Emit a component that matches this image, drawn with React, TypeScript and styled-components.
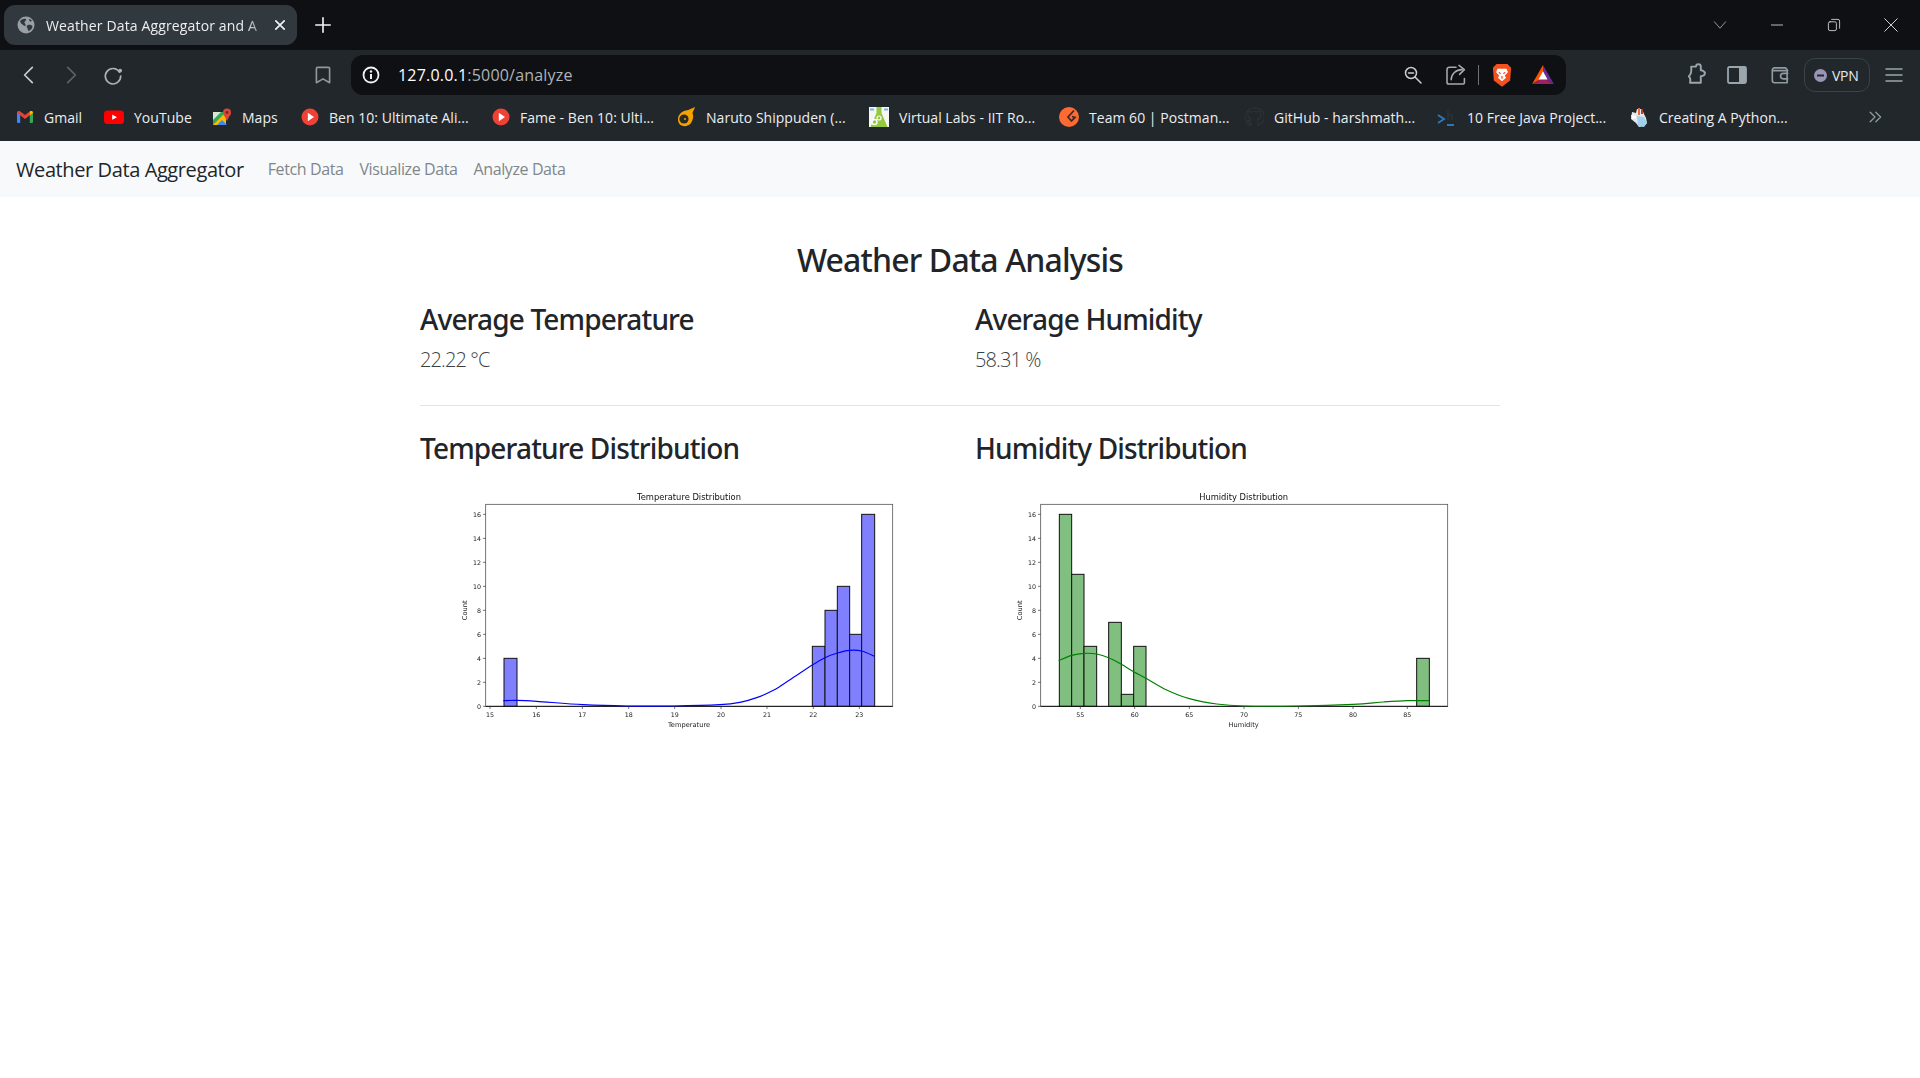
import React from "react";
import styled, { createGlobalStyle } from "styled-components";

const Global = createGlobalStyle`
  html, body { margin: 0; padding: 0; background: #fff; }
  body { font-family: "Open Sans", "Liberation Sans", sans-serif; color: #212529; width: 1920px; height: 1078px; overflow: hidden; }
`;
const Page = styled.div`display: flex; flex-direction: column; width: 1920px; height: 1078px;`;
const TabStrip = styled.div`display: flex; align-items: center; height: 50px; background: #0e1014; padding-left: 4px;`;
const Tab = styled.div`display: flex; align-items: center; flex: none; width: 293px; height: 40px; box-sizing: border-box; padding: 0 10px 0 13px; background: #31383e; border-radius: 11px; color: #eceef0;`;
const TabTitle = styled.span`
  flex: 1; margin-left: 11px; font-size: 14px; letter-spacing: 0.14px; white-space: nowrap;
  -webkit-mask-image: linear-gradient(90deg, #000 88%, rgba(0,0,0,0.2) 97%);
  mask-image: linear-gradient(90deg, #000 88%, rgba(0,0,0,0.2) 97%);
`;
const NewTab = styled.div`display: flex; margin-left: 17px;`;
const WindowControls = styled.div`display: flex; align-items: center; margin-left: auto;`;
const WindowButton = styled.div<{ $w: number }>`display: flex; justify-content: center; width: ${p => p.$w}px;`;
const Toolbar = styled.div`display: flex; align-items: center; height: 45px; background: #22272b; padding: 5px 0 0 8px; box-sizing: border-box;`;
const ToolButton = styled.div<{ $w?: number; $ml?: number }>`display: flex; justify-content: center; align-items: center; flex: none; width: ${p => p.$w ?? 42}px; height: 40px; margin-left: ${p => p.$ml ?? 0}px;`;
const ToolSpacer = styled.div`width: 168px; flex: none;`;
const AddressBar = styled.div`display: flex; align-items: center; flex: none; width: 1215px; height: 40px; margin: 0 109px 0 7px; padding-left: 11px; box-sizing: border-box; border-radius: 12px; background: #0e1014;`;
const Url = styled.div`margin-left: 18px; font-size: 16px; letter-spacing: 0.2px; color: #aeb3b8; flex: 1;`;
const UrlHost = styled.span`color: #fff;`;
const AddressDivider = styled.div`width: 1px; height: 20px; background: #6b7278; margin: 0 13px 0 2px;`;
const BraveMark = styled.svg`flex: none; margin-right: 8px;`;
const Vpn = styled.div`display: flex; align-items: center; flex: none; width: 66px; height: 34px; box-sizing: border-box; margin: 0 1px; padding-left: 8px; border: 1px solid #3b4248; border-radius: 11px; color: #e8eaed; font-size: 14px; letter-spacing: -0.3px; gap: 4px;`;
const BookmarkBar = styled.div`display: flex; align-items: center; height: 46px; box-sizing: border-box; padding: 0 0 2px 16px; background: #22272b; position: relative; z-index: 1;`;
const Bookmark = styled.div<{ $w: number }>`display: flex; align-items: center; flex: none; width: ${p => p.$w}px; gap: 10px; font-size: 14px; letter-spacing: 0.03px; color: #eceef0; white-space: nowrap;`;
const More = styled.div`display: flex; position: absolute; right: 37px; top: 14px;`;
const NavBar = styled.nav`display: flex; align-items: center; height: 56px; background: #f8f9fa; padding-left: 16px;`;
const Brand = styled.div`font-size: 20px; letter-spacing: -0.4px; color: #212529; margin-right: 24px; white-space: nowrap;`;
const NavLink = styled.div`font-size: 16px; letter-spacing: -0.4px; color: #80868b; margin-right: 16px; white-space: nowrap;`;
const Container = styled.main`width: 1080px; margin: 44px auto 0;`;
const PageTitle = styled.h2`margin: 0 0 23px; text-align: center; font-family: "Noto Sans", sans-serif; font-size: 32px; font-weight: 500; line-height: 38px; letter-spacing: -0.85px;`;
const Row = styled.div`display: grid; grid-template-columns: 525px 525px; column-gap: 30px;`;
const Heading = styled.h3`margin: 0 0 9px; font-family: "Noto Sans", sans-serif; font-size: 28px; font-weight: 500; line-height: 34px; letter-spacing: -0.85px;`;
const Lead = styled.p`margin: 0; font-size: 20px; font-weight: 300; line-height: 30px; letter-spacing: -0.9px; color: #3a3f44;`;
const Rule = styled.hr`margin: 30px 0 25px; border: 0; border-top: 1px solid #e3e4e5;`;
const ChartSvg = styled.svg`display: block; width: 525px; height: 260px; margin-top: 16px; filter: blur(0.3px);`;
const TickText = styled.text`font-family: "DejaVu Sans", sans-serif; font-size: 19px; fill: #222;`;
const AxisText = styled.text`font-family: "DejaVu Sans", sans-serif; font-size: 20px; fill: #222;`;
const TitleText = styled.text`font-family: "DejaVu Sans", sans-serif; font-size: 25px; fill: #111;`;

type Pt = [number, number];
const smooth = (pts: Pt[]) => {
  let d = `M${pts[0][0]} ${pts[0][1]}`;
  for (let i = 0; i < pts.length - 1; i++) {
    const p0 = pts[Math.max(i - 1, 0)], p1 = pts[i], p2 = pts[i + 1], p3 = pts[Math.min(i + 2, pts.length - 1)];
    d += ` C${p1[0] + (p2[0] - p0[0]) / 6} ${p1[1] + (p2[1] - p0[1]) / 6} ${p2[0] - (p3[0] - p1[0]) / 6} ${p2[1] - (p3[1] - p1[1]) / 6} ${p2[0]} ${p2[1]}`;
  }
  return d;
};

interface ChartProps {
  offset: number; left: number; right: number; title: string; xlabel: string; center: number;
  bars: [number, number, number][]; ticks: [string, number][]; curve: Pt[]; fill: string; line: string; countX: number;
}
const Chart = ({ offset, left, right, title, xlabel, center, bars, ticks, curve, fill, line, countX }: ChartProps) => (
  <ChartSvg viewBox={`${-offset} 0 1575 780`}>
    <TitleText x={center} y={56} textAnchor="middle">{title}</TitleText>
    <rect x={left} y={70} width={right - left} height={606} fill="#fff" stroke="#555" strokeWidth={2.4} />
    {bars.map(([a, b, c], i) => (
      <rect key={i} x={a} y={676 - c * 36} width={b - a} height={c * 36} fill={fill} stroke="#111" strokeWidth={3} />
    ))}
    <line x1={left} x2={right} y1={676} y2={676} stroke="#111" strokeWidth={3} />
    <path d={smooth(curve)} fill="none" stroke={line} strokeWidth={3.5} />
    {[0, 2, 4, 6, 8, 10, 12, 14, 16].map(v => (
      <g key={v}>
        <line x1={left - 8} x2={left} y1={676 - v * 36} y2={676 - v * 36} stroke="#333" strokeWidth={2} />
        <TickText x={left - 14} y={683 - v * 36} textAnchor="end">{v}</TickText>
      </g>
    ))}
    {ticks.map(([t, x]) => (
      <g key={t}>
        <line x1={x} x2={x} y1={676} y2={684} stroke="#333" strokeWidth={2} />
        <TickText x={x} y={707} textAnchor="middle">{t}</TickText>
      </g>
    ))}
    <AxisText x={center} y={738} textAnchor="middle">{xlabel}</AxisText>
    <AxisText transform={`translate(${countX} 388) rotate(-90)`} x={0} y={0} textAnchor="middle">Count</AxisText>
  </ChartSvg>
);

const tempBars: [number, number, number][] = [[192, 231, 4], [1117, 1155, 5], [1155, 1192, 8], [1192, 1229, 10], [1229, 1265, 6], [1265, 1304, 16]];
const humBars: [number, number, number][] = [[178, 215, 16], [215, 252, 11], [252, 290, 5], [326, 364, 7], [364, 401, 1], [401, 438, 5], [1250, 1288, 4]];
const tempTicks: [string, number][] = [["15", 150], ["16", 289], ["17", 427], ["18", 566], ["19", 704], ["20", 843], ["21", 981], ["22", 1120], ["23", 1258]];
const humTicks: [string, number][] = [["55", 241], ["60", 404], ["65", 568], ["70", 732], ["75", 895], ["80", 1059], ["85", 1222]];
const tempCurve: Pt[] = [[190, 659], [231, 658], [290, 661], [430, 671], [560, 675], [700, 675], [840, 671], [900, 664], [950, 650], [1000, 628], [1050, 596], [1117, 552], [1155, 530], [1192, 516], [1229, 508], [1265, 510], [1304, 526]];
const humCurve: Pt[] = [[176, 539], [215, 523], [252, 517], [290, 519], [326, 530], [364, 550], [401, 572], [438, 592], [500, 627], [568, 653], [650, 669], [732, 675], [895, 675], [1059, 670], [1150, 663], [1222, 659], [1288, 659]];

const Ico = ({ s = 20, c = "#aab2b8", w = 1.6, children }: { s?: number; c?: string; w?: number; children: React.ReactNode }) => (
  <svg width={s} height={s} viewBox="0 0 20 20" fill="none" stroke={c} strokeWidth={w} strokeLinecap="round" strokeLinejoin="round">{children}</svg>
);
const Favicon = ({ children, w = 20 }: { children: React.ReactNode; w?: number }) => (
  <svg width={w} height={20} viewBox={`0 0 ${w} 20`} style={{ flex: "none" }}>{children}</svg>
);
const Play = () => (<Favicon w={18}><circle cx="9" cy="10" r="8.5" fill="#ef4135" /><path d="M6.8 5.8 13 10l-6.2 4.2z" fill="#fff" /></Favicon>);
const Gmail = () => (
  <Favicon w={18}>
    <path d="M1 5.5h3.2V16H2.2A1.2 1.2 0 0 1 1 14.8z" fill="#4285f4" />
    <path d="M13.8 5.5H17v9.3a1.2 1.2 0 0 1-1.2 1.2h-2z" fill="#34a853" />
    <path d="M1 5.8C1 4 3 3.4 4.2 4.4L9 8l4.8-3.6C15 3.4 17 4 17 5.8L9 12z" fill="#ea4335" />
    <path d="M13.8 4.4C15 3.4 17 4 17 5.8l-3.2 2.4z" fill="#fbbc04" />
  </Favicon>
);
const YouTube = () => (<Favicon><rect x="0" y="3.5" width="20" height="13.5" rx="3.5" fill="#f00" /><path d="M8.2 7.6 13 10.2l-4.8 2.6z" fill="#fff" /></Favicon>);
const Maps = () => (
  <Favicon w={19}>
    <path d="M0 5h13v13H0z" fill="#35a853" />
    <path d="M0 18 13 5v13z" fill="#fbbc04" />
    <path d="M4 18l5-5 5 5z" fill="#4285f4" />
    <path d="M0 5h8L0 13z" fill="#d9e7d4" />
    <circle cx="14" cy="5.5" r="4" fill="#d8473c" /><path d="M11 8l3 6 3-6z" fill="#d8473c" /><circle cx="14" cy="5.5" r="1.4" fill="#7e211b" />
  </Favicon>
);
const Naruto = () => (
  <Favicon>
    <path d="M2 12C2 7 7 4 10 3.5 13 3 16 1 19 0c-1 3-2 4-2.500 6C18 9 17 13 15 16c-3 4-9 4-11.500 1C2.500 16 2 14 2 12z" fill="#f5a100" />
    <circle cx="8" cy="12" r="4.600" fill="#2a2a25" /><circle cx="9" cy="12" r="1" fill="#f5a100" />
  </Favicon>
);
const Labs = () => (
  <Favicon>
    <rect width="20" height="20" fill="#f5f7f5" />
    <path d="M1 2.500h4M15 2.500h4" stroke="#78b5dc" strokeWidth="2" />
    <path d="M7.500 0h5v6l6 14H1.500l6-14z" fill="#94c83d" />
    <circle cx="5.500" cy="15" r="2.500" fill="none" stroke="#fff" strokeWidth="1.400" /><circle cx="10" cy="11" r="2" fill="none" stroke="#fff" strokeWidth="1.200" />
  </Favicon>
);
const Postman = () => (
  <Favicon><circle cx="10" cy="10" r="10" fill="#ff6a33" /><path d="M15 3.500 9 10l3.500 4 3.500-3.500-3-1" fill="none" stroke="#3d2b22" strokeWidth="1.800" /></Favicon>
);
const GitHub = () => (
  <Favicon><path d="M10 1a9 9 0 0 0-3 17.500v-3c-2 .5-3-1-3.500-2 2 .5 3 0 3.500-1-3-1-3.500-3-3-5.500L4 4l3 1a8 8 0 0 1 6 0l3-1 .5 3c.5 2.500 0 4.500-3 5.500.5 1 .5 1.500.5 6A9 9 0 0 0 10 1z" fill="none" stroke="#2c3236" strokeWidth="1.200" /></Favicon>
);
const Term = () => (
  <Favicon><path d="M1 8l6 4-6 4" fill="none" stroke="#2b78b8" strokeWidth="2" /><path d="M11 3v10M11 8h4v5" fill="none" stroke="#2b3238" strokeWidth="1.600" /><path d="M10 18h7" stroke="#2b78b8" strokeWidth="2" /></Favicon>
);
const Python = () => (
  <Favicon>
    <path d="M3 5l4 1 1-4 5 0 2 5 2 4 1 5-3 3-5 1-3-4-5-4z" fill="#e4e8ec" />
    <path d="M8 9l7 1 3 6-3 4-6-1z" fill="#9fd0ee" />
    <path d="M9 1h2v7H9z" fill="#e06b3c" /><path d="M12 2h2v5h-2z" fill="#c0392b" /><path d="M2 8l5 1v2l-4 1z" fill="#fff" />
  </Favicon>
);

const books: [React.ReactNode, string, number][] = [
  [<Gmail />, "Gmail", 88], [<YouTube />, "YouTube", 109], [<Maps />, "Maps", 88],
  [<Play />, "Ben 10: Ultimate Ali...", 191], [<Play />, "Fame - Ben 10: Ulti...", 184],
  [<Naruto />, "Naruto Shippuden (...", 193], [<Labs />, "Virtual Labs - IIT Ro...", 190],
  [<Postman />, "Team 60 | Postman...", 185], [<GitHub />, "GitHub - harshmath...", 193],
  [<Term />, "10 Free Java Project...", 192], [<Python />, "Creating A Python...", 180],
];

export default function App() {
  return (
    <Page>
      <Global />
      <TabStrip>
        <Tab>
          <svg width="18" height="18" viewBox="0 0 18 18" style={{ flex: "none" }}>
            <circle cx="9" cy="9" r="8.500" fill="#9aa0a6" />
            <path d="M3 5c2-2 4-2.500 6-2 .5 1.500-1 2-1.500 3S9 8 8.500 9.500 6.500 9 5.500 8.500 3.500 7 3 5zM11 9c2-.5 4 0 4.500 1.500-.5 2.500-2 3.800-4 4.500-1-1-.5-2.500-1.500-3.500S10 9.500 11 9zM12.500 2.800l2.500 2-1.500 1-1.500-1.500z" fill="#31383e" />
          </svg>
          <TabTitle>Weather Data Aggregator and A</TabTitle>
          <Ico s={14} c="#f2f3f4" w={2.4}><path d="M4 4l12 12M16 4 4 16" /></Ico>
        </Tab>
        <NewTab><Ico s={18} c="#f2f3f4" w={1.800}><path d="M10 2v16M2 10h16" /></Ico></NewTab>
        <WindowControls>
          <WindowButton $w={56}><Ico s={16} c="#b8bcc0" w={1}><path d="M3 6l7 8 7-8" /></Ico></WindowButton>
          <WindowButton $w={57}><Ico s={16} c="#e6e8ea" w={1}><path d="M3 10h14" /></Ico></WindowButton>
          <WindowButton $w={57}><Ico s={16} c="#e6e8ea" w={1}><rect x="3" y="6" width="10" height="11" rx="2" /><path d="M7 3h8a2 2 0 0 1 2 2v9" /></Ico></WindowButton>
          <WindowButton $w={58}><Ico s={18} c="#e6e8ea" w={1}><path d="M3 3l14 14M17 3 3 17" /></Ico></WindowButton>
        </WindowControls>
      </TabStrip>
      <Toolbar>
        <ToolButton><Ico s={22} c="#c8ced2" w={1.500}><path d="M13 3 6 10l7 7" /></Ico></ToolButton>
        <ToolButton><Ico s={22} c="#5c6469" w={1.500}><path d="M7 3l7 7-7 7" /></Ico></ToolButton>
        <ToolButton><Ico s={22} c="#aab2b8" w={1.500}><path d="M16 7.500A7 7 0 1 0 17 11" /><circle cx="16.500" cy="6" r="1" fill="#aab2b8" /></Ico></ToolButton>
        <ToolSpacer />
        <ToolButton $w={42}><Ico s={22} c="#8f979d" w={1.500}><path d="M5 3h10a1 1 0 0 1 1 1v13l-6-3.500L4 17V4a1 1 0 0 1 1-1z" /></Ico></ToolButton>
        <AddressBar>
          <svg width="18" height="18" viewBox="0 0 18 18"><circle cx="9" cy="9" r="7.500" fill="none" stroke="#f2f3f4" strokeWidth="1.800" /><path d="M9 8v5" stroke="#f2f3f4" strokeWidth="2" /><circle cx="9" cy="5.500" r="1.200" fill="#f2f3f4" /></svg>
          <Url><UrlHost>127.0.0.1</UrlHost>:5000/analyze</Url>
          <Ico s={20} c="#c8ced2" w={1.500}><circle cx="8" cy="8" r="5.500" /><path d="M5.500 8h5M12 12l6 6" /></Ico>
          <ToolButton $w={40} $ml={13}>
            <Ico s={24} c="#a4a9ae" w={1.300}><path d="M10 3.500H4.500a2 2 0 0 0-2 2V16a1.500 1.500 0 0 0 1.500 1.500h12a1 1 0 0 0 1-1V13" /><path d="M6 14c0-5 4-8.500 9-8.500M12.500 2 17 5.500 13 9.500" /></Ico>
          </ToolButton>
          <AddressDivider />
          <BraveMark width="20" height="24" viewBox="0 0 22 26">
            <path d="M5 1h12l4 4-1 14-9 7-9-7L1 5z" fill="#f4511e" />
            <path d="M6 6h10l1.500 4-3.500 3.500 1.500 2.500-4.500 4-4.500-4L8 13.500 4.500 10z" fill="#fff" />
            <path d="M7.500 10l2 1.500M14.500 10l-2 1.500M11 14v3" stroke="#f4511e" strokeWidth="1.400" />
          </BraveMark>
          <ToolButton $w={46}>
            <svg width="22" height="20" viewBox="0 0 24 22">
              <path d="M12 0 24 21 12 14z" fill="#662d91" /><path d="M12 0 0 21 12 14z" fill="#ff5000" /><path d="M0 21h24l-12-7z" fill="#9e1f63" /><path d="M12 7l5 9H7z" fill="#fff" />
            </svg>
          </ToolButton>
        </AddressBar>
        <ToolButton $w={42}><Ico s={24} c="#9aa6ac" w={1.600}><path d="M6 3h4a2 2 0 0 1 4 0v3c2 0 2.500 1 3.500 2 0 2-1 3-3.500 3v5.500H5c.5-2 .5-4-1-5.500 1.500-1 2.500-3 2-8z" /></Ico></ToolButton>
        <ToolButton $w={40}>
          <svg width="20" height="18" viewBox="0 0 20 18"><rect x="1" y="1" width="18" height="16" rx="1.500" fill="none" stroke="#9aa6ac" strokeWidth="1.800" /><rect x="12" y="1" width="7" height="16" fill="#9aa6ac" /></svg>
        </ToolButton>
        <ToolButton $w={46}><Ico s={22} c="#8f9ba1" w={1.500}><path d="M3 5.500A2 2 0 0 1 5 3.500h10l1.500 1.500v12H5a2 2 0 0 1-2-2zM3 6h14M17 8.500h-4a1.500 1.500 0 0 0 0 5h4" /></Ico></ToolButton>
        <Vpn>
          <svg width="15" height="15" viewBox="0 0 15 15" style={{ flex: "none" }}><circle cx="7.500" cy="7.500" r="6.500" fill="#9896b4" /><rect x="4" y="6.500" width="7" height="2" fill="#22272b" /></svg>
          VPN
        </Vpn>
        <ToolButton $w={46}><Ico s={20} c="#9aa6ac" w={1.500}><path d="M2 4h16M2 10h16M2 16h16" /></Ico></ToolButton>
      </Toolbar>
      <BookmarkBar>
        {books.map(([icon, label, w], i) => <Bookmark key={i} $w={w}>{icon}{label}</Bookmark>)}
        <More><Ico s={16} c="#8f9ba1" w={1.600}><path d="M4 4l6 6-6 6M11 4l6 6-6 6" /></Ico></More>
      </BookmarkBar>
      <NavBar>
        <Brand>Weather Data Aggregator</Brand>
        <NavLink>Fetch Data</NavLink>
        <NavLink>Visualize Data</NavLink>
        <NavLink>Analyze Data</NavLink>
      </NavBar>
      <Container>
        <PageTitle>Weather Data Analysis</PageTitle>
        <Row>
          <div><Heading>Average Temperature</Heading><Lead>22.22 °C</Lead></div>
          <div><Heading>Average Humidity</Heading><Lead>58.31 %</Lead></div>
        </Row>
        <Rule />
        <Row>
          <div>
            <Heading>Temperature Distribution</Heading>
            <Chart offset={60} left={137} right={1358} center={747} countX={80} title="Temperature Distribution" xlabel="Temperature" bars={tempBars} ticks={tempTicks} curve={tempCurve} fill="#8080ff" line="#0000ff" />
          </div>
          <div>
            <Heading>Humidity Distribution</Heading>
            <Chart offset={75} left={122} right={1343} center={731} countX={65} title="Humidity Distribution" xlabel="Humidity" bars={humBars} ticks={humTicks} curve={humCurve} fill="#80bf80" line="#008000" />
          </div>
        </Row>
      </Container>
    </Page>
  );
}
